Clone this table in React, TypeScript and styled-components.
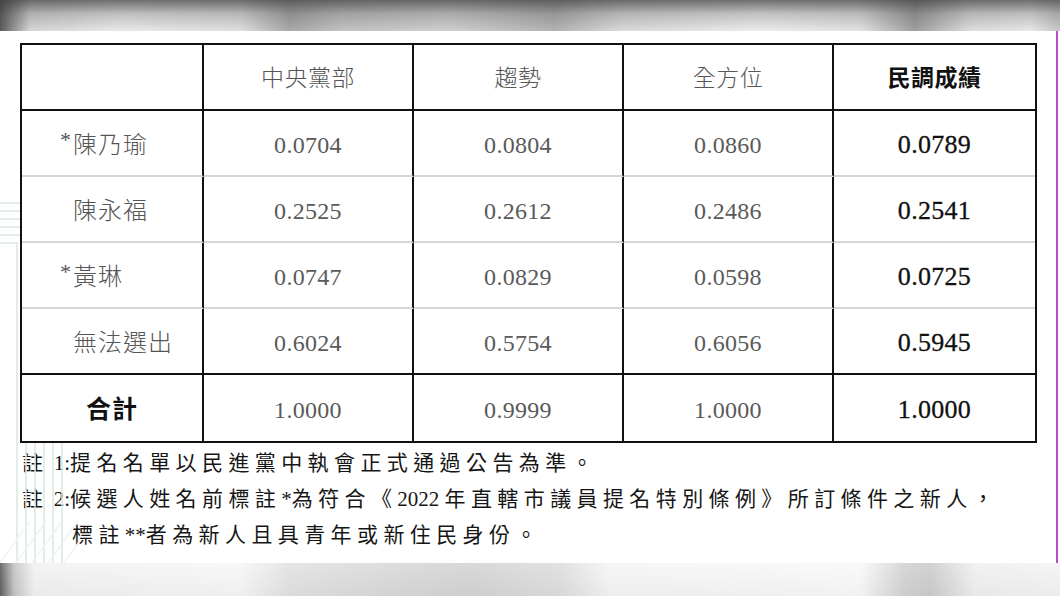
import React from 'react'
import styled, { createGlobalStyle } from 'styled-components'

const GlobalStyle = createGlobalStyle`
    html, body {
        margin: 0;
        padding: 0;
        background: #fff;
    }
    #root {
        width: 1060px;
        height: 596px;
        overflow: hidden;
    }
`;

const Page = styled.div`
    display: flex;
    flex-direction: column;
    width: 1060px;
    height: 596px;
    background: #fff;
`;

const TopBand = styled.div`
    height: 31px;
    flex-shrink: 0;
    background:
        linear-gradient(to bottom, rgba(70, 70, 70, 0.75) 0%, rgba(120, 120, 120, 0.35) 45%, rgba(255, 255, 255, 0.15) 100%),
        linear-gradient(to right, #3e3e3e 0px, #cfcfcf 30px, #e6e6e6 120px, #dadada 240px, #9a9a9a 290px, #b8b8b8 340px,
            #c8c8c8 450px, #a6a6a6 555px, #d4d4d4 620px, #eaeaea 760px, #dedede 860px, #8e8e8e 915px,
            #d8d8d8 970px, #e4e4e4 1030px, #bdbdbd 1060px);
`;

const BottomBand = styled.div`
    height: 33px;
    flex-shrink: 0;
    background:
        linear-gradient(to bottom, rgba(255, 255, 255, 0.2), rgba(200, 200, 200, 0.15)),
        linear-gradient(to right, #4a4a4a 0px, #bdbdbd 14px, #f0f0f0 34px, #f6f6f6 240px, #dedede 290px, #d4d4d4 400px,
            #cfcfcf 470px, #dadada 560px, #f4f4f4 610px, #f8f8f8 860px, #cdcdcd 905px, #c6c6c6 930px,
            #eeeeee 975px, #f2f2f2 1060px);
`;

const Sheet = styled.div`
    position: relative;
    flex: 1;
    padding: 12px 0 0 20px;
    box-sizing: border-box;
`;

const EdgeLine = styled.div`
    position: absolute;
    top: 0;
    bottom: 0;
    right: 2px;
    width: 2px;
    background: #b84ccb;
`;

const Deco = styled.svg`
    position: absolute;
    left: 0;
    top: 0;
    width: 80px;
    height: 532px;
`;

const Grid = styled.div`
    position: relative;
    display: grid;
    grid-template-columns: 182px 210px 210px 210px 201px;
    grid-auto-rows: 66px;
    width: 1013px;
    border: 2px solid #111;
    background: #fff;
`;

type Line = 'black' | 'gray' | 'none';

const Cell = styled.div<{ $last?: boolean; $line: Line; $align?: 'left' | 'center' }>`
    display: flex;
    align-items: center;
    justify-content: ${p => (p.$align === 'left' ? 'flex-start' : 'center')};
    padding-left: ${p => (p.$align === 'left' ? '38px' : '0')};
    box-sizing: border-box;
    border-right: ${p => (p.$last ? 'none' : '2px solid #111')};
    border-bottom: ${p => (p.$line === 'black' ? '2px solid #111' : p.$line === 'gray' ? '2px solid #d6d6d6' : 'none')};
    font-family: "Liberation Serif", "Noto Sans CJK TC", serif;
    font-size: 24px;
    color: #585858;
`;

const HeadText = styled.span<{ $strong?: boolean; $big?: boolean }>`
    font-family: "Noto Sans CJK TC", sans-serif;
    font-size: ${p => (p.$big ? '24px' : '23px')};
    font-weight: ${p => (p.$strong ? 700 : 300)};
    color: ${p => (p.$strong ? '#111' : '#555')};
    letter-spacing: ${p => (p.$big ? '1px' : '0.5px')};
    margin-bottom: 2px;
`;

const Total = styled(HeadText)`
    font-size: 25px;
    letter-spacing: 1px;
`;

const Num = styled.span<{ $strong?: boolean }>`
    font-family: "Liberation Serif", serif;
    font-size: ${p => (p.$strong ? '26px' : '24px')};
    color: ${p => (p.$strong ? '#111' : '#5a5a5a')};
    -webkit-text-stroke: ${p => (p.$strong ? '0.3px #111' : '0')};
    letter-spacing: 0.3px;
    margin-top: 4px;
`;

const Mark = styled.span`
    display: inline-block;
    width: 13px;
    font-family: "Liberation Serif", serif;
    font-size: 22px;
    color: #555;
    position: relative;
    top: -3px;
`;

const Notes = styled.div`
    margin-top: 1px;
    font-family: "Noto Sans CJK TC", sans-serif;
    font-size: 21px;
    font-weight: 400;
    line-height: 34px;
    color: #161616;
    letter-spacing: 5.4px;
    white-space: pre;
`;

const NoteLine = styled.div<{ $indent?: boolean }>`
    padding-left: ${p => (p.$indent ? '52px' : '2px')};
`;

const Latin = styled.span`
    font-family: "Liberation Serif", serif;
    letter-spacing: 0;
    font-weight: 400;
    font-size: 21px;
`;

interface IRow {
    name: string;
    star?: boolean;
    values: string[];
    line: Line;
}

const rows: IRow[] = [
    { name: '陳乃瑜', star: true, values: ['0.0704', '0.0804', '0.0860', '0.0789'], line: 'gray' },
    { name: '陳永福', values: ['0.2525', '0.2612', '0.2486', '0.2541'], line: 'gray' },
    { name: '黃琳', star: true, values: ['0.0747', '0.0829', '0.0598', '0.0725'], line: 'gray' },
    { name: '無法選出', values: ['0.6024', '0.5754', '0.6056', '0.5945'], line: 'black' },
];

const heads = ['中央黨部', '趨勢', '全方位'];

const Decoration: React.FC = () => {
    const corners = [0, 1, 2, 3, 4, 5];
    return (
        <Deco viewBox="0 0 80 532">
            {corners.map(i => (
                <path
                    key={i}
                    d={`M0 ${172 + i * 8} H${62 - i * 9} V532`}
                    fill="none"
                    stroke="#d7e8de"
                    strokeWidth="1.5"
                />
            ))}
            {[0, 1, 2, 3, 4].map(i => (
                <line key={'d' + i} x1={i * 16} y1="532" x2={i * 16 + 30} y2="490" stroke="#f0f4f1" strokeWidth="1.5" />
            ))}
        </Deco>
    );
};

const App: React.FC = () => {
    return (
        <Page>
            <GlobalStyle />
            <TopBand />
            <Sheet>
                <Decoration />
                <EdgeLine />
                <Grid>
                    <Cell $line="black" />
                    {heads.map(h => (
                        <Cell key={h} $line="black"><HeadText>{h}</HeadText></Cell>
                    ))}
                    <Cell $line="black" $last><HeadText $strong>民調成績</HeadText></Cell>

                    {rows.map(r => (
                        <React.Fragment key={r.name}>
                            <Cell $line={r.line} $align="left">
                                <Mark>{r.star ? '*' : ''}</Mark>
                                <HeadText $big>{r.name}</HeadText>
                            </Cell>
                            {r.values.map((v, i) => (
                                <Cell key={i} $line={r.line} $last={i === 3}>
                                    <Num $strong={i === 3}>{v}</Num>
                                </Cell>
                            ))}
                        </React.Fragment>
                    ))}

                    <Cell $line="none"><Total $strong>合計</Total></Cell>
                    <Cell $line="none"><Num>1.0000</Num></Cell>
                    <Cell $line="none"><Num>0.9999</Num></Cell>
                    <Cell $line="none"><Num>1.0000</Num></Cell>
                    <Cell $line="none" $last><Num $strong>1.0000</Num></Cell>
                </Grid>
                <Notes>
                    <NoteLine>註<Latin> 1:</Latin>提名名單以民進黨中執會正式通過公告為準。</NoteLine>
                    <NoteLine>註<Latin> 2:</Latin>候選人姓名前標註<Latin>*</Latin>為符合《<Latin>2022 </Latin>年直轄市議員提名特別條例》所訂條件之新人，</NoteLine>
                    <NoteLine $indent>標註<Latin>**</Latin>者為新人且具青年或新住民身份。</NoteLine>
                </Notes>
            </Sheet>
            <BottomBand />
        </Page>
    );
};

export default App;
